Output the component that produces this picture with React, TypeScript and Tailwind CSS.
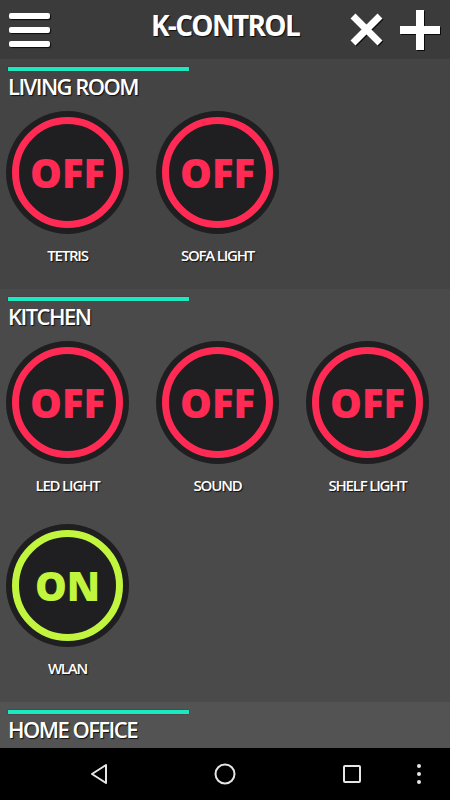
import React from "react";

type Device = { name: string; on: boolean };
type Room = { name: string; bg: string; devices: Device[] };

const ROOMS: Room[] = [
  {
    name: "LIVING ROOM",
    bg: "bg-[#444444]",
    devices: [
      { name: "TETRIS", on: false },
      { name: "SOFA LIGHT", on: false },
    ],
  },
  {
    name: "KITCHEN",
    bg: "bg-[#4a4a4a]",
    devices: [
      { name: "LED LIGHT", on: false },
      { name: "SOUND", on: false },
      { name: "SHELF LIGHT", on: false },
      { name: "WLAN", on: true },
    ],
  },
  { name: "HOME OFFICE", bg: "bg-[#535353]", devices: [] },
];

const FONT = { fontFamily: '"Open Sans", "Noto Sans", sans-serif' };

function Toggle({ device }: { device: Device }) {
  const color = device.on ? "border-[#c2f53e] text-[#c2f53e]" : "border-[#ff2b54] text-[#ff2b54]";
  return (
    <div className="ml-[6px] flex w-[123px] flex-col items-center pb-[24px]">
      <div className="h-[123px] w-[123px] rounded-full bg-[#1f1f21] p-[6px]">
        <div className={`flex h-full w-full items-center justify-center rounded-full border-[7px] ${color}`}>
          <span className="text-[40px] font-extrabold leading-none">{device.on ? "ON" : "OFF"}</span>
        </div>
      </div>
      <p className="mt-[11px] text-[15px] font-semibold leading-[20px] tracking-[-0.08em] text-white [text-shadow:1px_1px_1px_rgba(0,0,0,0.8)]">
        {device.name}
      </p>
    </div>
  );
}

function RoomSection({ room }: { room: Room }) {
  return (
    <section className={`${room.bg} pt-[8px]`}>
      <div className="ml-[8px] h-[4px] w-[181px] bg-[#1de9c0] shadow-[0_0_1px_rgba(0,0,0,0.9)]" />
      <h2 className="ml-[8px] mt-[2px] text-[22px] font-semibold leading-[26px] tracking-[-0.07em] text-white [text-shadow:1px_1px_1px_rgba(0,0,0,0.8)]">
        {room.name}
      </h2>
      {room.devices.length > 0 ? (
        <div className="mt-[12px] grid grid-cols-3 gap-y-[5px]">
          {room.devices.map((d) => (
            <Toggle key={d.name} device={d} />
          ))}
        </div>
      ) : (
        <div className="h-[60px]" />
      )}
    </section>
  );
}

export default function App() {
  return (
    <div className="flex h-[800px] w-[450px] flex-col overflow-hidden bg-[#444444]" style={FONT}>
      {/* Header */}
      <header className="grid h-[59px] shrink-0 grid-cols-[1fr_auto_1fr] bg-[#3b3b3b]">
        <div className="flex flex-col gap-[8px] pl-[9px] pt-[13px]">
          {[0, 1, 2].map((i) => (
            <div key={i} className="h-[6px] w-[41px] rounded-[2px] bg-white shadow-[1px_1px_1px_rgba(0,0,0,0.8)]" />
          ))}
        </div>
        <h1 className="pt-[8px] text-[28px] font-bold leading-[34px] tracking-[-0.06em] text-white [text-shadow:1px_1px_1px_rgba(0,0,0,0.8)]">
          K-CONTROL
        </h1>
        <div className="flex items-start justify-end gap-[17px] pr-[10px] pt-[10px]">
          <svg width="33" height="33" viewBox="0 0 33 33" className="mt-[3px] drop-shadow-[1px_1px_0.5px_rgba(0,0,0,0.8)]">
            <path d="M3 3 L30 30 M30 3 L3 30" stroke="white" strokeWidth="7" />
          </svg>
          <svg width="40" height="40" viewBox="0 0 40 40" className="drop-shadow-[1px_1px_0.5px_rgba(0,0,0,0.8)]">
            <path d="M20 0 V40 M0 20 H40" stroke="white" strokeWidth="8" />
          </svg>
        </div>
      </header>

      <main className="flex-1 overflow-hidden">
        {ROOMS.map((r) => (
          <RoomSection key={r.name} room={r} />
        ))}
      </main>

      {/* Android nav bar */}
      <nav className="flex h-[52px] shrink-0 items-center bg-black">
        <svg width="20" height="22" viewBox="0 0 20 22" className="ml-[89px]">
          <path d="M17 2 L3 11 L17 20 Z" fill="none" stroke="#e6e6e6" strokeWidth="2" strokeLinejoin="round" />
        </svg>
        <svg width="22" height="22" viewBox="0 0 22 22" className="ml-[105px]">
          <circle cx="11" cy="11" r="9.5" fill="none" stroke="#e6e6e6" strokeWidth="2" />
        </svg>
        <svg width="20" height="20" viewBox="0 0 20 20" className="ml-[106px]">
          <rect x="2" y="2" width="16" height="16" rx="1" fill="none" stroke="#e6e6e6" strokeWidth="2" />
        </svg>
        <div className="ml-[55px] flex flex-col gap-[4px]">
          {[0, 1, 2].map((i) => (
            <div key={i} className="h-[4px] w-[4px] rounded-full bg-[#e6e6e6]" />
          ))}
        </div>
      </nav>
    </div>
  );
}
